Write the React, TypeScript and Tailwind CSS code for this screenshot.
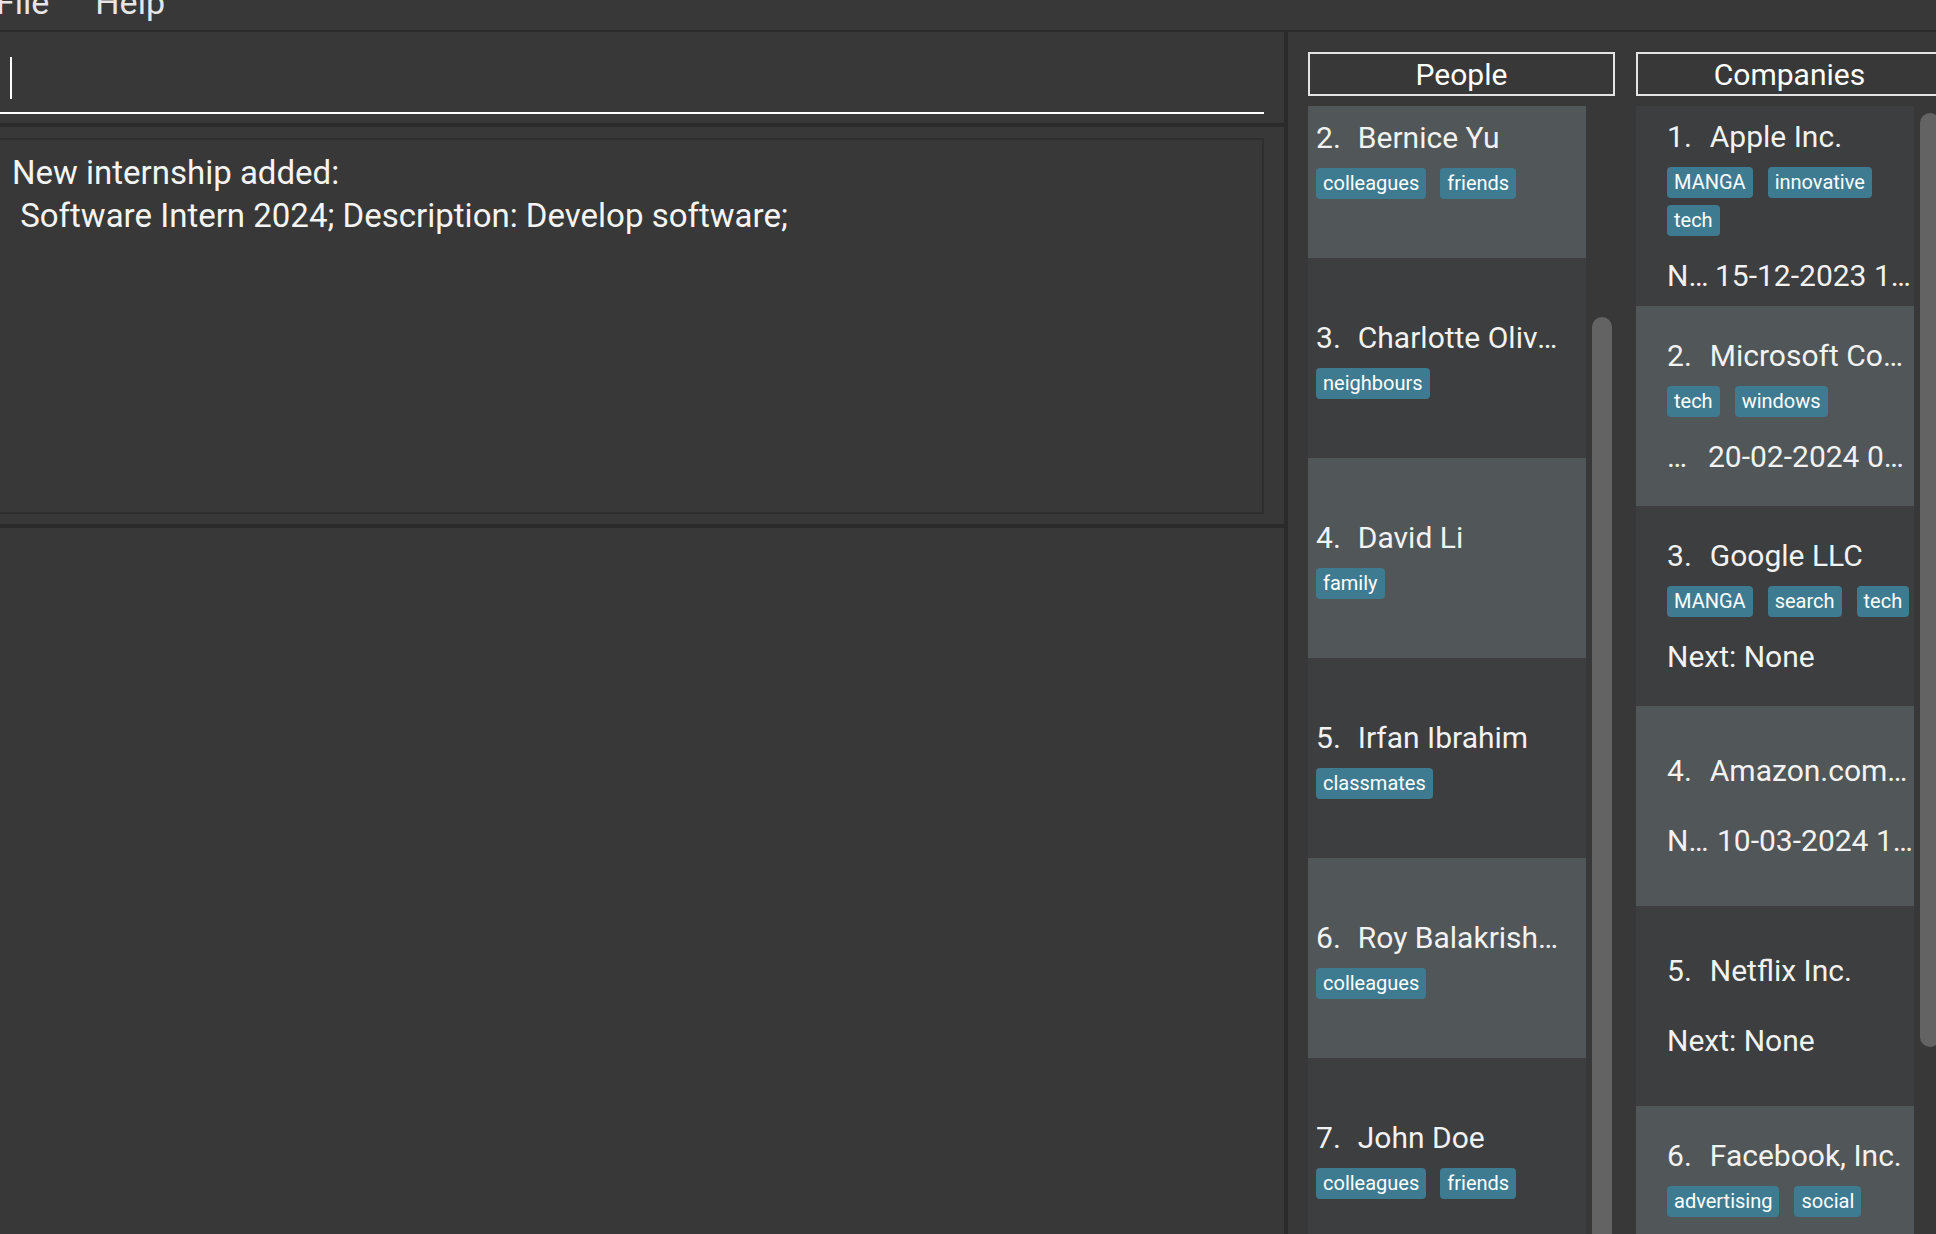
import React from "react";

type Person = { id: number; name: string; tags: string[] };
type Company = {
  id: number;
  name: string;
  tags: string[];
  next?: string;
  nextW?: string;
  date?: string;
  none?: boolean;
};

const people: Person[] = [
  { id: 1, name: "Alex Yeoh", tags: ["friends"] },
  { id: 2, name: "Bernice Yu", tags: ["colleagues", "friends"] },
  { id: 3, name: "Charlotte Oliveiro", tags: ["neighbours"] },
  { id: 4, name: "David Li", tags: ["family"] },
  { id: 5, name: "Irfan Ibrahim", tags: ["classmates"] },
  { id: 6, name: "Roy Balakrishnan", tags: ["colleagues"] },
  { id: 7, name: "John Doe", tags: ["colleagues", "friends"] },
];

const companies: Company[] = [
  { id: 1, name: "Apple Inc.", tags: ["MANGA", "innovative", "tech"], next: "N…", nextW: "w-[41px]", date: "15-12-2023 1…" },
  { id: 2, name: "Microsoft Corporation", tags: ["tech", "windows"], next: "…", nextW: "w-[34px]", date: "20-02-2024 0…" },
  { id: 3, name: "Google LLC", tags: ["MANGA", "search", "tech"], none: true },
  { id: 4, name: "Amazon.com Inc.", tags: [], next: "N…", nextW: "w-[43px]", date: "10-03-2024 1…" },
  { id: 5, name: "Netflix Inc.", tags: [], none: true },
  { id: 6, name: "Facebook, Inc.", tags: ["advertising", "social"], none: true },
];

function Tag({ t }: { t: string }) {
  return (
    <span className="h-[31px] px-[7px] rounded-[4px] bg-[#3e7b91] text-white text-[20px] leading-[31px] whitespace-nowrap">
      {t}
    </span>
  );
}

function PersonCard({ p, i }: { p: Person; i: number }) {
  return (
    <div
      className={`h-[200px] shrink-0 flex flex-col justify-center pl-[8px] pr-[20px] ${
        i % 2 === 0 ? "bg-[#3c3e3f]" : "bg-[#515658]"
      }`}
    >
      <div className="flex items-center leading-[40px] text-[30px] text-[#f2f2f2] whitespace-nowrap">
        <span>{p.id}.</span>
        <span className="ml-[17px] min-w-0 flex-1 overflow-hidden text-ellipsis">{p.name}</span>
      </div>
      <div className="mt-[10px] flex flex-wrap gap-x-[14px] gap-y-[7px]">
        {p.tags.map((t) => (
          <Tag key={t} t={t} />
        ))}
      </div>
    </div>
  );
}

function CompanyCard({ c, i }: { c: Company; i: number }) {
  return (
    <div
      className={`h-[200px] shrink-0 flex flex-col justify-center pl-[31px] pr-[1px] ${
        i % 2 === 0 ? "bg-[#3c3e3f]" : "bg-[#515658]"
      }`}
    >
      <div className="flex items-center leading-[40px] text-[30px] text-[#f2f2f2] whitespace-nowrap">
        <span>{c.id}.</span>
        <span className="ml-[18px] min-w-0 flex-1 overflow-hidden text-ellipsis">{c.name}</span>
      </div>
      <div className="mt-[10px] flex flex-wrap gap-x-[15px] gap-y-[7px]">
        {c.tags.map((t) => (
          <Tag key={t} t={t} />
        ))}
      </div>
      <div className="mt-[20px] flex leading-[40px] text-[30px] text-[#f2f2f2] whitespace-nowrap overflow-hidden">
        {c.none ? (
          <span>Next: None</span>
        ) : (
          <>
            <span className={`${c.nextW} shrink-0 overflow-hidden`}>{c.next}</span>
            <span className="ml-[7px] min-w-0 flex-1 overflow-hidden">{c.date}</span>
          </>
        )}
      </div>
    </div>
  );
}

export default function App() {
  return (
    <div className="w-[1936px] h-[1234px] bg-[#383838] overflow-hidden flex flex-col [font-family:Roboto,'Liberation_Sans',sans-serif]">
      {/* menu bar */}
      <div className="h-[32px] shrink-0 border-b-2 border-[#2b2b2b] overflow-hidden">
        <div className="flex -mt-[15px] -ml-[4px] gap-[46px] text-[34px] leading-[34px] text-[#e6e6e6]">
          <span>File</span>
          <span>Help</span>
        </div>
      </div>

      <div className="flex flex-1 min-h-0">
        {/* left column */}
        <div className="w-[1284px] shrink-0 flex flex-col">
          {/* command box */}
          <div className="h-[91px] shrink-0 flex flex-col">
            <div className="ml-[10px] mt-[25px] w-[2px] h-[42px] bg-white" />
            <div className="mt-[13px] w-[1264px] h-[2px] bg-white" />
          </div>
          <div className="h-[4px] shrink-0 bg-[#2b2b2b]" />
          {/* result display */}
          <div className="h-[397px] shrink-0 pt-[11px]">
            <div className="-ml-[4px] w-[1268px] h-[376px] border-2 border-[#2e2e2e] pt-[11px] pl-[14px] text-[33px] leading-[43px] text-[#f4f4f4] whitespace-pre">
              <div>New internship added:</div>
              <div> Software Intern 2024; Description: Develop software;</div>
            </div>
          </div>
          <div className="h-[4px] shrink-0 bg-[#2b2b2b]" />
          <div className="flex-1" />
        </div>

        {/* divider */}
        <div className="w-[4px] shrink-0 bg-[#2b2b2b]" />

        {/* right panel */}
        <div className="flex-1 min-w-0 flex gap-[21px] pl-[20px] pt-[20px] overflow-hidden">
          {/* people */}
          <div className="w-[307px] shrink-0 flex flex-col min-h-0">
            <div className="h-[44px] shrink-0 border-2 border-[#e4e4e4] flex items-center justify-center text-[30px] text-white">
              People
            </div>
            <div className="mt-[10px] flex-1 min-h-0 flex overflow-hidden">
              <div className="w-[278px] shrink-0 overflow-hidden">
                <div className="-mt-[248px] flex flex-col">
                  {people.map((p, i) => (
                    <PersonCard key={p.id} p={p} i={i} />
                  ))}
                </div>
              </div>
              <div className="ml-[6px] w-[20px] shrink-0 pt-[211px]">
                <div className="w-[20px] h-[1200px] rounded-[10px] bg-[#636363]" />
              </div>
            </div>
          </div>

          {/* companies */}
          <div className="w-[307px] shrink-0 flex flex-col min-h-0">
            <div className="h-[44px] shrink-0 border-2 border-[#e4e4e4] flex items-center justify-center text-[30px] text-white">
              Companies
            </div>
            <div className="mt-[10px] flex-1 min-h-0 flex overflow-hidden">
              <div className="w-[278px] shrink-0 overflow-hidden flex flex-col">
                {companies.map((c, i) => (
                  <CompanyCard key={c.id} c={c} i={i} />
                ))}
              </div>
              <div className="ml-[6px] w-[20px] shrink-0 pt-[7px]">
                <div className="w-[20px] h-[934px] rounded-[10px] bg-[#636363]" />
              </div>
            </div>
          </div>
        </div>
      </div>
    </div>
  );
}
